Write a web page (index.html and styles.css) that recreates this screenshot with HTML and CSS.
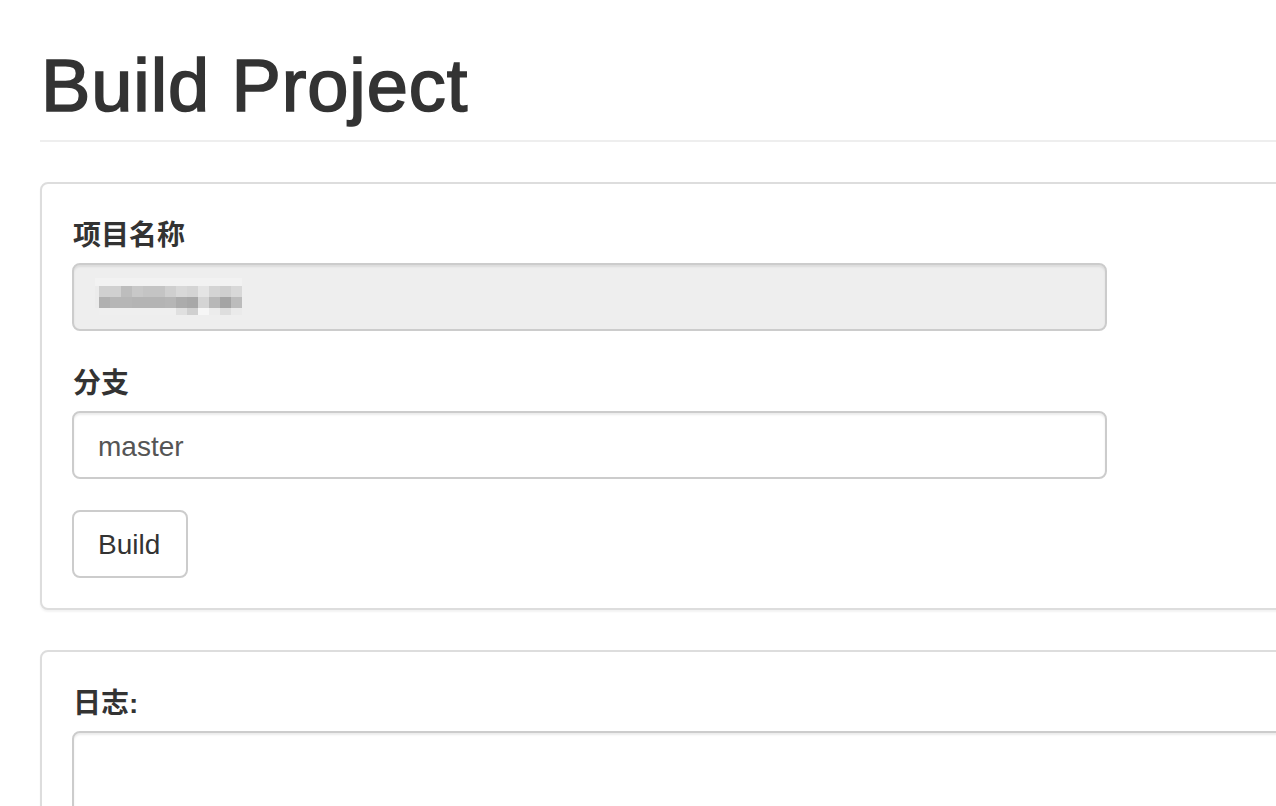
FILE: index.html
```html
<!DOCTYPE html>
<html lang="zh">
<head>
<meta charset="utf-8">
<title>Build Project</title>
<link rel="stylesheet" href="styles.css">
</head>
<body>
<div class="page">
  <div class="page-header">
    <h1>Build Project</h1>
  </div>

  <div class="panel">
    <div class="panel-body">
      <div class="form-group">
        <label class="control-label">项目名称</label>
        <div class="form-control disabled">
          <svg class="mosaic" width="168" height="37" viewBox="0 0 168 37" aria-hidden="true">
            <rect x="0" y="0" width="168" height="37" fill="#eeeeee"/>
            <rect x="0" y="0" width="147" height="8" fill="#f2f2f2"/>
            <rect x="0" y="8" width="4" height="22" fill="#ebebeb"/>
            <g transform="translate(4,8)">
              <rect x="0" width="11" height="11" fill="#d0d0d0"/>
              <rect x="11" width="11" height="11" fill="#d0d0d0"/>
              <rect x="22" width="11" height="11" fill="#bdbdbd"/>
              <rect x="33" width="11" height="11" fill="#c8c8c8"/>
              <rect x="44" width="11" height="11" fill="#c4c4c4"/>
              <rect x="55" width="11" height="11" fill="#c4c4c4"/>
              <rect x="66" width="11" height="11" fill="#cfcfcf"/>
              <rect x="77" width="11" height="11" fill="#d8d8d8"/>
              <rect x="88" width="11" height="11" fill="#d4d4d4"/>
              <rect x="99" width="11" height="11" fill="#e4e4e4"/>
              <rect x="110" width="11" height="11" fill="#d4d4d4"/>
              <rect x="121" width="11" height="11" fill="#cfcfcf"/>
              <rect x="132" width="11" height="11" fill="#d8d8d8"/>
            </g>
            <g transform="translate(4,19)">
              <rect x="0" width="11" height="11" fill="#b0b0b0"/>
              <rect x="11" width="11" height="11" fill="#b6b6b6"/>
              <rect x="22" width="11" height="11" fill="#b6b6b6"/>
              <rect x="33" width="11" height="11" fill="#b4b4b4"/>
              <rect x="44" width="11" height="11" fill="#b4b4b4"/>
              <rect x="55" width="11" height="11" fill="#b4b4b4"/>
              <rect x="66" width="11" height="11" fill="#b6b6b6"/>
              <rect x="77" width="11" height="11" fill="#acacac"/>
              <rect x="88" width="11" height="11" fill="#a8a8a8"/>
              <rect x="99" width="11" height="11" fill="#d4d4d4"/>
              <rect x="110" width="11" height="11" fill="#b8b8b8"/>
              <rect x="121" width="11" height="11" fill="#a4a4a4"/>
              <rect x="132" width="11" height="11" fill="#bcbcbc"/>
            </g>
            <g transform="translate(4,30)">
              <rect x="0" width="77" height="7" fill="#efefef"/>
              <rect x="77" width="11" height="7" fill="#e0e0e0"/>
              <rect x="88" width="11" height="7" fill="#d0d0d0"/>
              <rect x="99" width="11" height="7" fill="#f6f6f6"/>
              <rect x="110" width="11" height="7" fill="#ececec"/>
              <rect x="121" width="11" height="7" fill="#dedede"/>
              <rect x="132" width="11" height="7" fill="#eaeaea"/>
            </g>
          </svg>
        </div>
      </div>

      <div class="form-group">
        <label class="control-label">分支</label>
        <input class="form-control" type="text" value="master">
      </div>

      <button class="btn" type="button">Build</button>
    </div>
  </div>

  <div class="panel">
    <div class="panel-body">
      <label class="control-label">日志:</label>
      <textarea class="form-control log"></textarea>
    </div>
  </div>
</div>
</body>
</html>
```

FILE: styles.css
```css
html, body {
  margin: 0;
  padding: 0;
  overflow: hidden;
  background: #fff;
}

body {
  font-family: "Liberation Sans", "Noto Sans CJK SC", Arial, sans-serif;
  color: #333;
  font-size: 28px;
  line-height: 40px;
}

.page {
  width: 1500px;
  padding-left: 40px;
}

.page-header {
  margin-top: 46px;
  padding-bottom: 15px;
  border-bottom: 2px solid #eee;
  margin-bottom: 40px;
}

.page-header h1 {
  margin: 0;
  font-size: 74px;
  line-height: 79px;
  font-weight: 500;
  letter-spacing: 0.9px;
  padding-left: 1px;
  -webkit-text-stroke: 1.7px #333;
}

.panel {
  width: 1400px;
  border: 2px solid #ddd;
  border-radius: 8px;
  background: #fff;
  box-shadow: 0 2px 2px rgba(0, 0, 0, 0.05);
  margin-bottom: 40px;
}

.panel-body {
  padding: 30px;
}

.form-group {
  margin-bottom: 31px;
}

.control-label {
  display: block;
  font-weight: bold;
  padding-top: 2px;
  margin-bottom: 7px;
  font-size: 28px;
  line-height: 40px;
  padding-left: 1px;
}

.form-control {
  display: block;
  box-sizing: border-box;
  width: 1035px;
  height: 68px;
  padding: 14px 24px 10px;
  font-family: "Liberation Sans", "Noto Sans CJK SC", Arial, sans-serif;
  font-size: 28px;
  line-height: 40px;
  color: #555;
  background: #fff;
  border: 2px solid #ccc;
  border-radius: 8px;
  box-shadow: inset 0 2px 2px rgba(0, 0, 0, 0.075);
  outline: none;
  margin: 0;
}

.form-control.disabled {
  background: #eee;
  padding: 13px 21px;
}

.mosaic {
  display: block;
}

.btn {
  display: block;
  box-sizing: border-box;
  height: 68px;
  padding: 13px 26px 11px 24px;
  font-family: "Liberation Sans", "Noto Sans CJK SC", Arial, sans-serif;
  font-size: 28px;
  line-height: 40px;
  color: #333;
  background: #fff;
  border: 2px solid #ccc;
  border-radius: 8px;
  cursor: pointer;
  margin: 0;
}

.log {
  width: 1320px;
  height: 400px;
  resize: none;
}
```
